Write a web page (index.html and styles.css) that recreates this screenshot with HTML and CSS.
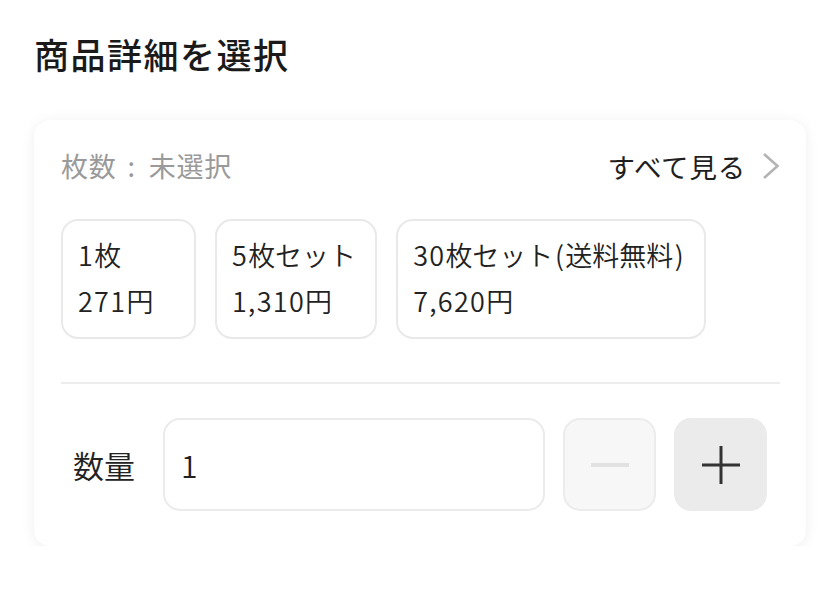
FILE: index.html
```html
<!DOCTYPE html>
<html lang="ja">
<head>
<meta charset="utf-8">
<title>商品詳細を選択</title>
<link rel="stylesheet" href="styles.css">
</head>
<body>
<main class="page">
  <h1 class="title">商品詳細を選択</h1>
  <section class="card">
    <div class="head">
      <span class="selected">枚数<span class="colon"> : </span>未選択</span>
      <a class="see-all">すべて見る
        <svg class="chev" width="18" height="28" viewBox="0 0 18 28"><polyline points="2,2 15.5,14 2,26" fill="none" stroke="#b3b3b3" stroke-width="2.6"/></svg>
      </a>
    </div>
    <div class="options">
      <div class="opt opt-first"><div><span class="n">1</span>枚</div><div><span class="n">271</span>円</div></div>
      <div class="opt"><div><span class="n">5</span>枚セット</div><div><span class="n">1,310</span>円</div></div>
      <div class="opt"><div><span class="n">30</span>枚セット<span class="p">(</span>送料無料<span class="p">)</span></div><div><span class="n">7,620</span>円</div></div>
    </div>
    <hr class="divider">
    <div class="qty">
      <span class="qty-label">数量</span>
      <div class="qty-input"><span class="n">1</span></div>
      <div class="btn btn-minus"><svg width="40" height="40" viewBox="0 0 40 40"><line x1="1" y1="20" x2="39" y2="20" stroke="#e2e2e2" stroke-width="4"/></svg></div>
      <div class="btn btn-plus"><svg width="40" height="40" viewBox="0 0 40 40"><line x1="1" y1="20" x2="39" y2="20" stroke="#333" stroke-width="3"/><line x1="20" y1="1" x2="20" y2="39" stroke="#333" stroke-width="3"/></svg></div>
    </div>
  </section>
</main>
</body>
</html>
```
FILE: styles.css
```css
* { box-sizing: border-box; }
html, body { margin: 0; padding: 0; background: #ffffff; }
body {
  font-family: "Noto Sans CJK JP", "Noto Sans", sans-serif;
  color: #222;
}
.page {
  padding: 29px 34px 0 34px;
}
.title {
  margin: 0 0 41px 0;
  font-size: 35px;
  line-height: 50px;
  font-weight: 500;
  letter-spacing: 1.5px;
  color: #1a1a1a;
}
.card {
  width: 772px;
  background: #fff;
  border-radius: 16px;
  box-shadow: 0 2px 14px rgba(0, 0, 0, 0.07);
  padding: 26px 26px 35px 27px;
}
.head {
  display: flex;
  justify-content: space-between;
  align-items: center;
  height: 40px;
  font-size: 27px;
  line-height: 40px;
  letter-spacing: 0.8px;
}
.selected { color: #9a9a9a; }
.colon { margin: 0 6px 0 4px; }
.see-all {
  display: flex;
  align-items: center;
  gap: 16px;
  font-size: 27.5px;
  color: #1f1f1f;
}
.chev { display: block; }
.options {
  display: flex;
  gap: 19px;
  margin-top: 33px;
}
.opt {
  border: 2px solid #e9e9e9;
  border-radius: 17px;
  padding: 11px 19px 13px 15px;
  font-size: 27px;
  line-height: 46px;
  font-weight: 350;
  color: #222;
  white-space: nowrap;
}
.n { letter-spacing: 1.3px; }
.p { margin: 0 1.5px; }
.opt-first { min-width: 135px; }
.divider {
  margin: 43px 0 0 0;
  border: 0;
  height: 2px;
  background: #ededed;
}
.qty {
  display: flex;
  align-items: center;
  gap: 18px;
  margin-top: 34px;
  padding: 0 13px 0 12px;
}
.qty-label {
  font-size: 31px;
  width: 72px;
  font-weight: 350;
  color: #222;
}
.qty-input {
  flex: 1;
  height: 93px;
  border: 2px solid #ebebeb;
  border-radius: 17px;
  padding-left: 16px;
  display: flex;
  align-items: center;
  font-size: 30px;
  font-weight: 350;
  color: #222;
}
.btn {
  width: 93px;
  height: 93px;
  border-radius: 17px;
  display: flex;
  align-items: center;
  justify-content: center;
}
.btn svg { display: block; }
.btn-minus {
  background: #f7f7f7;
  border: 2px solid #ececec;
}
.btn-plus {
  background: #ebebeb;
}
```
